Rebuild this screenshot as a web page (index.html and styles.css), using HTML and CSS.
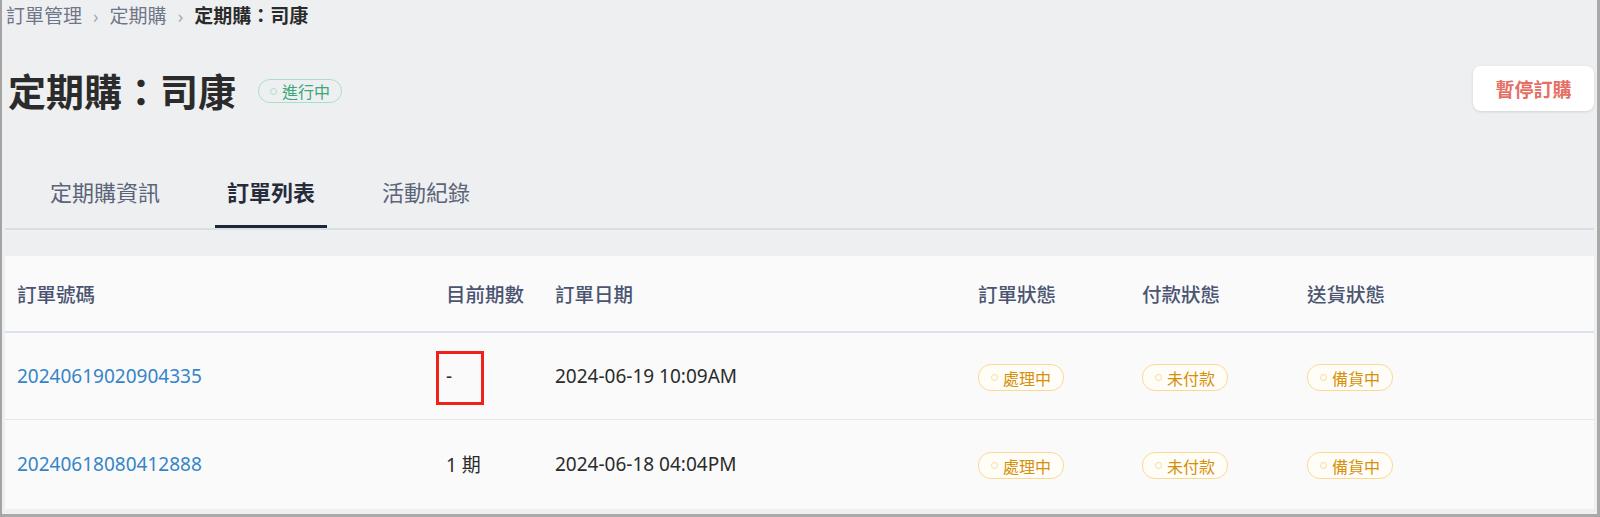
FILE: index.html
```html
<!DOCTYPE html>
<html lang="zh-Hant">
<head>
<meta charset="utf-8">
<title>定期購：司康</title>
<link rel="stylesheet" href="styles.css">
</head>
<body>
<div class="frame">
  <nav class="crumbs">
    <span class="crumb">訂單管理</span>
    <span class="sep">›</span>
    <span class="crumb">定期購</span>
    <span class="sep">›</span>
    <span class="crumb current">定期購：司康</span>
  </nav>

  <header class="head">
    <div class="head-left">
      <h1 class="title">定期購：司康</h1>
      <span class="badge badge-green"><span class="dot"></span>進行中</span>
    </div>
    <button class="btn-pause">暫停訂購</button>
  </header>

  <div class="tabs">
    <div class="tab">定期購資訊</div>
    <div class="tab active">訂單列表</div>
    <div class="tab">活動紀錄</div>
  </div>

  <section class="card">
    <div class="row row-head">
      <div>訂單號碼</div>
      <div>目前期數</div>
      <div>訂單日期</div>
      <div>訂單狀態</div>
      <div>付款狀態</div>
      <div>送貨狀態</div>
    </div>
    <div class="row">
      <div><a class="link">20240619020904335</a></div>
      <div class="period"><span>-</span><span class="mark"></span></div>
      <div>2024-06-19 10:09AM</div>
      <div><span class="badge badge-orange"><span class="dot"></span>處理中</span></div>
      <div><span class="badge badge-orange"><span class="dot"></span>未付款</span></div>
      <div><span class="badge badge-orange"><span class="dot"></span>備貨中</span></div>
    </div>
    <div class="row last">
      <div><a class="link">20240618080412888</a></div>
      <div class="period"><span>1 期</span></div>
      <div>2024-06-18 04:04PM</div>
      <div><span class="badge badge-orange"><span class="dot"></span>處理中</span></div>
      <div><span class="badge badge-orange"><span class="dot"></span>未付款</span></div>
      <div><span class="badge badge-orange"><span class="dot"></span>備貨中</span></div>
    </div>
  </section>
</div>
</body>
</html>
```

FILE: styles.css
```css
* { box-sizing: border-box; }
html, body { margin: 0; padding: 0; }
body {
  width: 1600px;
  height: 517px;
  overflow: hidden;
  font-family: "Noto Sans", "Noto Sans CJK TC", sans-serif;
  background: #eeeff1;
}
.frame {
  height: 517px;
  border-left: 2px solid #a4a4a4;
  border-right: 3px solid #a9a9a9;
  border-bottom: 3px solid #a9a9a9;
  padding: 0 3px;
  background: #eeeff1;
}
.crumbs {
  display: flex;
  align-items: center;
  gap: 11px;
  padding: 4px 0 0 1px;
  height: 28px;
  font-size: 19px;
  line-height: 24px;
  color: #6f7689;
}
.crumbs .sep { color: #a4aab6; font-size: 18px; }
.crumbs .current { color: #2b2b2b; font-weight: 700; }

.head {
  display: flex;
  justify-content: space-between;
  align-items: center;
  margin-top: 38px;
  height: 48px;
}
.head-left { display: flex; align-items: center; gap: 22px; padding-left: 3px; }
.title {
  margin: 0;
  font-size: 38px;
  line-height: 48px;
  font-weight: 700;
  color: #2b2b2b;
  font-family: "Noto Sans CJK TC", sans-serif;
}
.badge {
  display: inline-flex;
  align-items: center;
  gap: 5px;
  height: 25px;
  padding: 0 11px 0 11px;
  border-radius: 13px;
  font-size: 16px;
  line-height: 20px;
  font-family: "Noto Sans CJK TC", sans-serif;
}
.badge .dot {
  width: 7px; height: 7px; border-radius: 50%;
  border: 1.5px solid currentColor;
}
.badge-green {
  height: 24px;
  border: 1.5px solid #a9dfc8;
  color: #3aa878;
  margin-top: 2px;
}
.badge-green .dot { border-color: #a9dfc8; }
.badge-orange {
  height: 27px;
  border: 1.5px solid #fcd993;
  color: #d58f0a;
  background: #fffdf8;
  padding: 0 12px 0 12px;
}
.badge-orange .dot { border-color: #fcd993; }

.btn-pause {
  width: 121px;
  height: 45px;
  border: none;
  border-radius: 8px;
  background: #ffffff;
  box-shadow: 0 1px 3px rgba(0,0,0,0.12);
  color: #e56f64;
  font-size: 19px;
  font-weight: 700;
  font-family: "Noto Sans CJK TC", sans-serif;
  margin-top: -3px;
}

.tabs {
  display: flex;
  gap: 43px;
  margin-top: 63px;
  padding-left: 33px;
  border-bottom: 2px solid #d6dee7;
}
.tab {
  padding: 0 12px 20px;
  font-size: 22px;
  line-height: 28px;
  color: #5b6478;
  border-bottom: 3px solid transparent;
  font-family: "Noto Sans CJK TC", sans-serif;
}
.tab.active {
  color: #262c3a;
  font-weight: 700;
  border-bottom-color: #1f2637;
}

.card {
  margin-top: 26px;
  background: #fafafa;
  height: 253px;
}
.row {
  display: grid;
  grid-template-columns: 429px 109px 423px 164px 165px 1fr;
  align-items: center;
  padding-left: 12px;
  height: 87px;
  border-bottom: 1.5px solid #e2e6ef;
  font-size: 19px;
  color: #2b2b2b;
}
.row.last { border-bottom: none; height: 88px; }
.row-head {
  height: 77px;
  border-bottom: 2px solid #dbe2ee;
  font-size: 19.5px;
  font-weight: 500;
  color: #4b5572;
  font-family: "Noto Sans CJK TC", sans-serif;
}
.link { color: #3585c8; font-size: 19px; text-decoration: none; }
.period { position: relative; }
.mark {
  position: absolute;
  left: -10px;
  top: -12px;
  width: 48px;
  height: 54px;
  border: 3px solid #f0201a;
}
```
